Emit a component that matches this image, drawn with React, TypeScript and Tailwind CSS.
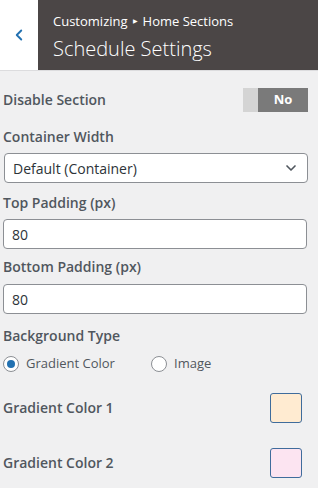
import { ChevronDown, ChevronLeft } from 'lucide-react'

const font = { fontFamily: '"Open Sans", "Noto Sans", sans-serif' }

function Label({ children }: { children: React.ReactNode }) {
  return <div className="text-[14px] font-semibold text-[#50575e] leading-5">{children}</div>
}

export default function App() {
  return (
    <div style={font} className="w-[318px] h-[488px] bg-[#f0f0f1] overflow-hidden text-[#3c434a]">
      <div className="flex h-[71px] border-b border-[#dcdcde]">
        <button className="w-[38px] bg-white grid place-items-center text-[#2271b1]">
          <ChevronLeft className="w-[18px] h-[18px]" strokeWidth={2.5} />
        </button>
        <div className="flex-1 bg-[#4b4646] text-white pl-[15px] pt-[10px]">
          <div className="text-[13px] leading-5 flex items-center gap-[5px]">
            Customizing <span className="text-[6px] mt-[1px]">▶</span> Home Sections
          </div>
          <div className="text-[20px] leading-7 mt-[4px] font-light">Schedule Settings</div>
        </div>
      </div>

      <div className="pl-[3px] pr-[10px]">
        <div className="flex items-center justify-between mt-[17px] h-[24px]">
          <Label>Disable Section</Label>
          <div className="flex h-[24px] w-[65px]">
            <div className="w-[15px] bg-[#d4d4d4]" />
            <div className="flex-1 bg-[#7a7a7a] text-white font-bold text-[13px] grid place-items-center">No</div>
          </div>
        </div>

        <div className="mt-[15px]"><Label>Container Width</Label></div>
        <div className="mt-[6px] h-[30px] ml-[1px] bg-white border border-[#8c8f94] rounded-[4px] flex items-center justify-between pl-[8px] pr-[8px] text-[14px] text-[#2c3338]">
          <span>Default (Container)</span>
          <ChevronDown className="w-[16px] h-[16px] text-[#50575e]" strokeWidth={2.5} />
        </div>

        <div className="mt-[10px]"><Label>Top Padding (px)</Label></div>
        <div className="mt-[6px] h-[30px] bg-white border border-[#8c8f94] rounded-[4px] flex items-center pl-[8px] text-[14px] text-[#2c3338] mr-[1px]">80</div>

        <div className="mt-[8px]"><Label>Bottom Padding (px)</Label></div>
        <div className="mt-[7px] h-[30px] bg-white border border-[#8c8f94] rounded-[4px] flex items-center pl-[8px] text-[14px] text-[#2c3338] mr-[1px]">80</div>

        <div className="mt-[12px]"><Label>Background Type</Label></div>
        <div className="mt-[8px] flex items-center text-[13px] text-[#50575e]">
          <div className="flex items-center gap-[7px] w-[148px]">
            <span className="w-[16px] h-[16px] rounded-full border border-[#8c8f94] bg-white grid place-items-center">
              <span className="w-[8px] h-[8px] rounded-full bg-[#2271b1]" />
            </span>
            Gradient Color
          </div>
          <div className="flex items-center gap-[7px]">
            <span className="w-[16px] h-[16px] rounded-full border border-[#8c8f94] bg-white" />
            Image
          </div>
        </div>

        <div className="mt-[19px] flex items-center justify-between pr-[6px]">
          <Label>Gradient Color 1</Label>
          <div className="w-[32px] h-[30px] rounded-[3px] border border-[#3f6c9c] bg-[#ffebd1]" />
        </div>
        <div className="mt-[25px] flex items-center justify-between pr-[6px]">
          <Label>Gradient Color 2</Label>
          <div className="w-[32px] h-[30px] rounded-[3px] border border-[#3f6c9c] bg-[#fce4f1]" />
        </div>
      </div>
    </div>
  )
}
